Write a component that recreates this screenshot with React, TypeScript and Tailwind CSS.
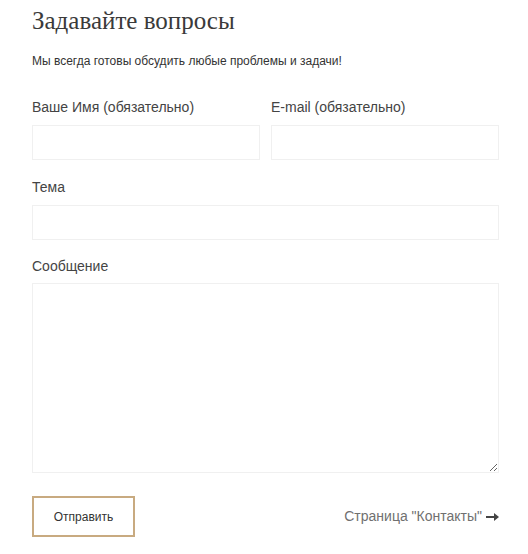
import React from "react";

export default function App() {
  const sans = { fontFamily: '"Liberation Sans", Arial, sans-serif' };
  return (
    <div className="w-[528px] h-[554px] bg-white pl-[32px] pr-[29px]" style={sans}>
      <h1
        className="pt-[8px] text-[25px] leading-[26px] text-[#3a3a3a]"
        style={{ fontFamily: '"Liberation Serif", "Times New Roman", serif' }}
      >
        Задавайте вопросы
      </h1>
      <p className="mt-[19px] text-[12px] leading-[16px] text-[#333]">
        Мы всегда готовы обсудить любые проблемы и задачи!
      </p>
      <div className="mt-[28px] grid grid-cols-2 gap-x-[11px]">
        <div>
          <label className="block text-[14px] leading-[20px] text-[#444]">Ваше Имя (обязательно)</label>
          <input className="mt-[8px] block w-full h-[35px] border border-[#f0f0f0] outline-none" />
        </div>
        <div>
          <label className="block text-[14px] leading-[20px] text-[#444]">E-mail (обязательно)</label>
          <input className="mt-[8px] block w-full h-[35px] border border-[#f0f0f0] outline-none" />
        </div>
      </div>
      <label className="mt-[17px] block text-[14px] leading-[20px] text-[#444]">Тема</label>
      <input className="mt-[8px] block w-full h-[35px] border border-[#f0f0f0] outline-none" />
      <label className="mt-[16px] block text-[14px] leading-[20px] text-[#444]">Сообщение</label>
      <textarea className="mt-[7px] block w-full h-[190px] border border-[#f0f0f0] outline-none" />
      <div className="mt-[23px] flex items-center justify-between">
        <button className="w-[103px] h-[41px] border-2 border-[#c8aa80] text-[12px] text-[#333] bg-white">
          Отправить
        </button>
        <a className="flex items-center gap-[4px] text-[14px] text-[#707070]">
          <span>Страница "Контакты"</span>
          <svg width="13" height="8" viewBox="0 0 13 8">
            <rect x="0" y="3" width="9" height="2" fill="#444" />
            <path d="M8 0 L13 4 L8 8 Z" fill="#444" />
          </svg>
        </a>
      </div>
    </div>
  );
}
